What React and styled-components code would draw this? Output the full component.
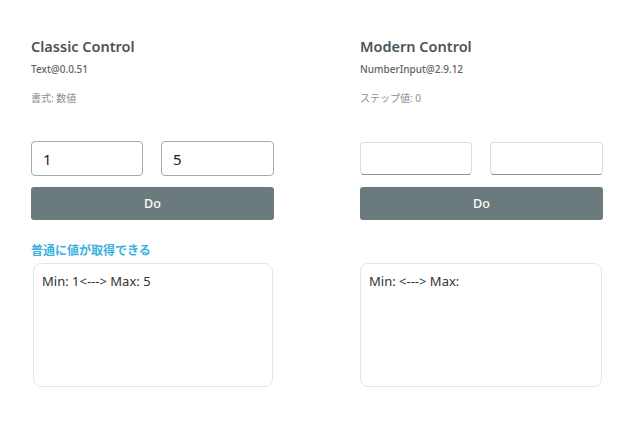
import styled, { createGlobalStyle } from "styled-components";

const Global = createGlobalStyle`
  html, body {
    margin: 0;
    padding: 0;
    background: #ffffff;
  }
  body {
    font-family: "Noto Sans", "Noto Sans CJK JP", sans-serif;
  }
`;

const Page = styled.div`
  width: 630px;
  height: 440px;
  box-sizing: border-box;
  padding: 36px 0 0 31px;
  display: grid;
  grid-template-columns: 243px 243px;
  column-gap: 86px;
`;

const Column = styled.section`
  display: flex;
  flex-direction: column;
`;

const Title = styled.h2`
  margin: 0;
  font-size: 14.5px;
  line-height: 20px;
  font-weight: 600;
  color: #4b5559;
`;

const Version = styled.div`
  margin-top: 6px;
  font-size: 10px;
  line-height: 14px;
  font-weight: 500;
  color: #5d6568;
`;

const Note = styled.div`
  margin-top: 15px;
  font-size: 10px;
  line-height: 14px;
  color: #8a8f92;
`;

const InputRow = styled.div`
  margin-top: 36px;
  display: grid;
  grid-template-columns: 112px 113px;
  column-gap: 18px;
`;

const Field = styled.input`
  box-sizing: border-box;
  width: 100%;
  height: ${(p) => (p.$modern ? "33px" : "35px")};
  margin-top: ${(p) => (p.$modern ? "1px" : "0")};
  padding: 0 11px;
  border-radius: 4px;
  font-family: "Noto Sans", sans-serif;
  font-size: 15px;
  color: #222;
  background: #fff;
  outline: none;
  border: 1px solid ${(p) => (p.$modern ? "#dcdcdc" : "#a3abae")};
  border-bottom-color: ${(p) => (p.$modern ? "#8e8e8e" : "#a3abae")};
`;

const DoButton = styled.button`
  margin-top: ${(p) => (p.$modern ? "12px" : "11px")};
  height: 33px;
  border: none;
  border-radius: 3px;
  background: #6b7a7c;
  color: #ffffff;
  font-family: "Noto Sans", sans-serif;
  font-size: 12.5px;
  font-weight: 500;
  cursor: pointer;
`;

const Hint = styled.div`
  margin-top: 22px;
  height: 17px;
  font-size: 12px;
  line-height: 17px;
  font-weight: 700;
  color: #38b1e0;
`;

const Output = styled.div`
  margin: 4px 1px 0 ${(p) => (p.$modern ? "0" : "2px")};
  height: 124px;
  box-sizing: border-box;
  padding: 8px 8px;
  border: 1px solid #e2e7e8;
  border-radius: 8px;
  font-size: 13px;
  line-height: 18px;
  color: #333;
`;

const panels = [
  {
    title: "Classic Control",
    version: "Text@0.0.51",
    note: "書式: 数値",
    min: "1",
    max: "5",
    hint: "普通に値が取得できる",
    modern: false,
  },
  {
    title: "Modern Control",
    version: "NumberInput@2.9.12",
    note: "ステップ値: 0",
    min: "",
    max: "",
    hint: "",
    modern: true,
  },
];

export default function App() {
  return (
    <>
      <Global />
      <Page>
        {panels.map((p) => (
          <Column key={p.title}>
            <Title>{p.title}</Title>
            <Version>{p.version}</Version>
            <Note>{p.note}</Note>
            <InputRow>
              <Field $modern={p.modern} defaultValue={p.min} />
              <Field $modern={p.modern} defaultValue={p.max} />
            </InputRow>
            <DoButton $modern={p.modern}>Do</DoButton>
            <Hint>{p.hint}</Hint>
            <Output $modern={p.modern}>
              Min: {p.min}&lt;---&gt; Max: {p.max}
            </Output>
          </Column>
        ))}
      </Page>
    </>
  );
}
